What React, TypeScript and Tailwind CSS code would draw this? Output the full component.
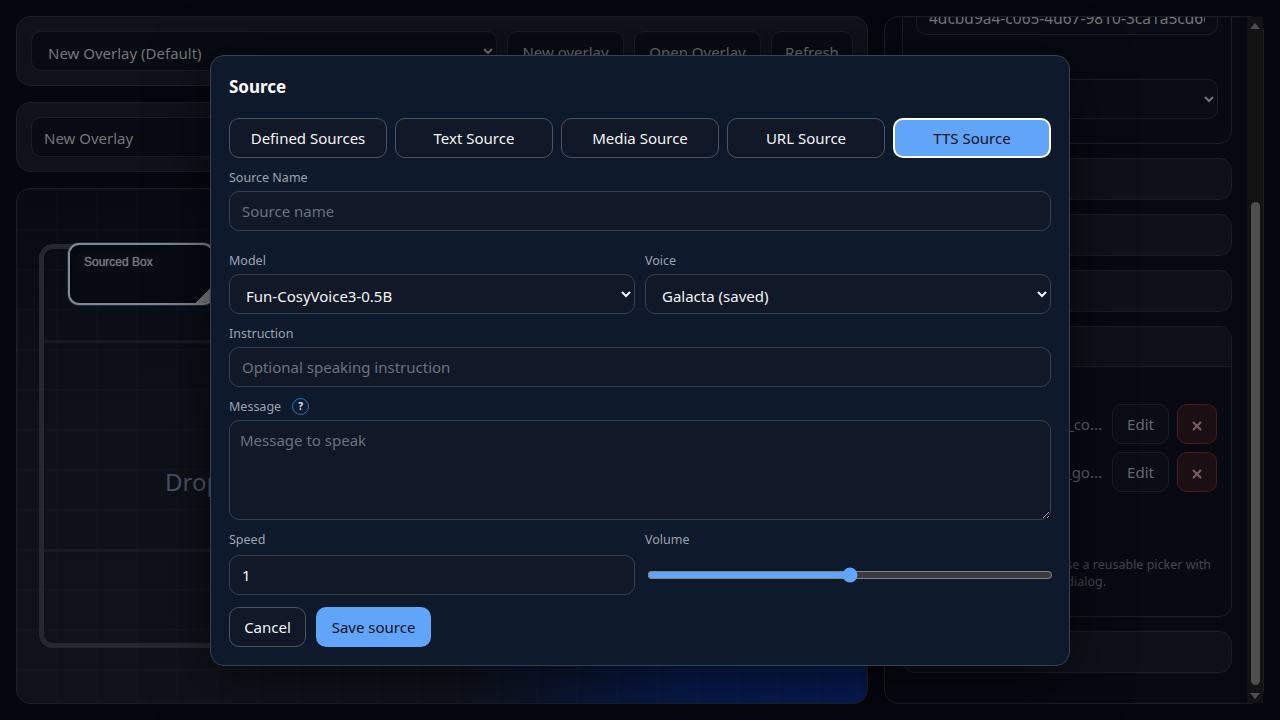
import React from "react";
import { X } from "lucide-react";

const dimBtn = "h-10 rounded-[10px] border border-[#1a1e27] bg-[#090c14] pt-[2px] text-[#6f7175] text-[15px] whitespace-nowrap";
const lbl = "block h-4 pt-[1px] leading-4 text-[12.5px] text-[#9ca3af]";
const field = "block w-full h-10 rounded-[10px] border border-[#374151] bg-[#111827] px-3 text-[15px] text-[#f3f4f6] placeholder:text-[#6b7280] outline-none";
const selectField = "block w-full h-10 rounded-[10px] border border-[#374151] bg-[#111827] px-3 pt-[4px] text-[15px] text-[#f3f4f6] outline-none";
const tab = "h-10 rounded-[10px] border border-[#4b5563] bg-[#111827] text-[15px] text-[#f3f4f6]";

function StubCard() {
  return <div className="h-[42px] shrink-0 rounded-[12px] border border-[#1a1e27] bg-[#0e1118]" />;
}

function FileRow({ name }: { name: string }) {
  return (
    <div className="flex items-center justify-end gap-2">
      <span className="flex-1 text-right pr-[2px] text-[15px] text-[#5f6165] whitespace-nowrap overflow-hidden">{name}</span>
      <button className="h-10 w-[57px] rounded-[10px] border border-[#1a1e27] bg-[#0a0d14] text-[15px] text-[#66686c]">Edit</button>
      <button className="h-10 w-10 flex items-center justify-center rounded-[10px] border border-[#4a1c20] bg-[#1c0f14] text-[#7c5e62]">
        <X size={14} strokeWidth={3.5} className="mt-[3px]" />
      </button>
    </div>
  );
}

export default function App() {
  return (
    <div className="relative h-screen w-full overflow-hidden bg-[#05070e] [color-scheme:dark] font-['Noto_Sans',sans-serif]">
      <div className="flex h-full gap-4 p-4">
        <div className="flex w-[852px] shrink-0 flex-col gap-4">
          <div className="flex h-[70px] shrink-0 items-center gap-[10px] rounded-[14px] border border-[#1a1f29] bg-[#0f1219] px-[14px]">
            <select className="h-10 min-w-0 flex-1 rounded-[10px] border border-[#1a1e27] bg-[#080b13] px-3 pt-[4px] text-[15px] text-[#74767a]">
              <option>New Overlay (Default)</option>
            </select>
            <button className={`${dimBtn} w-[117px] shrink-0`}>New overlay</button>
            <button className={`${dimBtn} w-[127px] shrink-0`}>Open Overlay</button>
            <button className={`${dimBtn} w-[82px] shrink-0`}>Refresh</button>
          </div>
          <div className="flex h-[70px] shrink-0 items-center rounded-[14px] border border-[#1a1f29] bg-[#0f1219] px-[14px]">
            <input readOnly value="New Overlay" className="h-10 w-full rounded-[10px] border border-[#1a1e27] bg-[#080b13] px-3 pt-[2px] text-[15px] text-[#74767a] outline-none" />
          </div>
          <div className="relative flex-1 overflow-hidden rounded-[14px] border border-[#1a1f29] bg-[radial-gradient(ellipse_420px_200px_at_100%_100%,#071b52_0%,#071a4a_45%,rgba(7,26,74,0)_100%),linear-gradient(180deg,#070a12_0%,#0e1118_45%,#0f1219_100%)]">
            <div className="absolute inset-0 bg-[linear-gradient(rgba(255,255,255,0.018)_1px,transparent_1px),linear-gradient(90deg,rgba(255,255,255,0.018)_1px,transparent_1px)] bg-[size:40px_40px]" />
            <div className="absolute left-[22px] top-[55px] h-[404px] w-[805px] rounded-[14px] border-[5px] border-[#26282d]">
              <div className="absolute left-0 right-0 top-[91px] h-[3px] bg-[#191b20]" />
              <div className="absolute left-0 right-0 top-[300px] h-[3px] bg-[#191b20]" />
            </div>
            <div className="absolute left-[148px] top-[277px] whitespace-nowrap text-2xl leading-8 text-[#4a5567]">Drop sources here to place them on the overlay</div>
            <div className="absolute left-[51px] top-[54px] h-[62px] w-[146px] overflow-hidden rounded-[11px] border-2 border-[#84878b] bg-[#070a12] shadow-[0_0_0_1px_rgba(59,100,160,0.35)]">
              <span className="absolute left-[6px] top-[7px] rounded-md bg-[#090c13] px-2 py-[2px] font-['Liberation_Sans',sans-serif] text-[12px] leading-4 text-[#74777b] [text-shadow:0_0_1px_#74777b]">Sourced Box</span>
              <div className="absolute bottom-0 right-0 h-4 w-4 bg-[linear-gradient(135deg,transparent_50%,#7a7c80_50%)]" />
            </div>
          </div>
        </div>

        <div className="flex h-[688px] w-[380px] shrink-0 rounded-[14px] border border-[#1a1f29] bg-[#060910]">
          <div className="min-w-0 flex-1 overflow-hidden pl-[17px] pr-[15px]">
            <div className="-mt-5 flex flex-col gap-[14px]">
              <div className="h-[147px] shrink-0 rounded-[12px] border border-[#1a1e27] bg-[#070a12] px-[13px] pt-[3px]">
                <input readOnly value="4dcbd9a4-c065-4d67-9810-3ca1a5cd6e12" className="h-[34px] w-full rounded-[10px] border border-[#1a1e27] bg-[#090c14] px-3 text-[15.5px] text-[#74767a] outline-none" />
                <select className="mt-[44px] h-10 w-full rounded-[10px] border border-[#1a1e27] bg-[#090c14] px-3 text-[15px] text-[#74767a]">
                  <option></option>
                </select>
              </div>
              <StubCard />
              <StubCard />
              <StubCard />
              <div className="h-[291px] shrink-0 overflow-hidden rounded-[12px] border border-[#1a1e27] bg-[#070a12]">
                <div className="h-10 border-b border-[#1a1e27] bg-[#0e1118]" />
                <div className="flex flex-col gap-2 px-[14px] pt-[37px]">
                  <FileRow name="tts_voice_sample_co..." />
                  <FileRow name="overlay_logo_image_go..." />
                </div>
                <p className="mt-[64px] pl-[14px] pr-[20px] text-right text-[12.5px] leading-[17px] text-[#45474c]">
                  Use a reusable picker with
                  <br />
                  <span className="block pr-[105px]">dialog.</span>
                </p>
              </div>
              <StubCard />
            </div>
          </div>
          <div className="flex w-4 shrink-0 flex-col items-center bg-[#131313]">
            <div className="mt-[6px] h-0 w-0 border-x-[5px] border-b-[6px] border-x-transparent border-b-[#4f4f4f]" />
            <div className="mt-[173px] h-[483px] w-[9px] rounded-full bg-[#4f4f4f]" />
            <div className="mt-[8px] h-0 w-0 border-x-[5px] border-t-[6px] border-x-transparent border-t-[#4f4f4f]" />
          </div>
        </div>
      </div>

      <div className="absolute inset-0 flex items-start justify-center pt-[55px]">
        <div className="h-[611px] w-[860px] rounded-[14px] border border-[#33415a] bg-[#0f192c] px-[18px] pt-[19px] shadow-[0_10px_60px_rgba(0,0,0,0.55)]">
          <h2 className="h-6 text-[17px] font-bold leading-6 text-white">Source</h2>
          <div className="mt-[19px] grid grid-cols-5 gap-2">
            <button className={tab}>Defined Sources</button>
            <button className={tab}>Text Source</button>
            <button className={tab}>Media Source</button>
            <button className={tab}>URL Source</button>
            <button className="h-10 rounded-[10px] border-2 border-white bg-[#60a5fa] text-[15px] text-[#0b1220]">TTS Source</button>
          </div>
          <label className={`${lbl} mt-[11px] mb-[6px]`}>Source Name</label>
          <input className={field} placeholder="Source name" />
          <div className="mt-[21px] grid grid-cols-2 gap-x-[10px]">
            <div>
              <label className={`${lbl} mb-[6px]`}>Model</label>
              <select className={selectField}><option>Fun-CosyVoice3-0.5B</option></select>
            </div>
            <div>
              <label className={`${lbl} mb-[6px]`}>Voice</label>
              <select className={selectField}><option>Galacta (saved)</option></select>
            </div>
          </div>
          <label className={`${lbl} mt-[11px] mb-[6px]`}>Instruction</label>
          <input className={field} placeholder="Optional speaking instruction" />
          <div className="mt-[11px] mb-[6px] flex h-4 items-center gap-[11px]">
            <label className={lbl}>Message</label>
            <span className="flex h-[17px] w-[17px] items-center justify-center rounded-full border border-[#2f6fb8] bg-[#0f1d33] text-[10px] font-bold leading-none text-[#dbeafe]">?</span>
          </div>
          <textarea className="block h-[100px] w-full rounded-[10px] border border-[#374151] bg-[#111827] px-[10px] pt-[9px] pb-[10px] text-[15px] leading-5 text-[#f3f4f6] placeholder:text-[#6b7280] outline-none" placeholder="Message to speak" />
          <div className="mt-[11px] grid grid-cols-2 gap-x-[10px]">
            <div>
              <label className={`${lbl} mb-2`}>Speed</label>
              <input readOnly value="1" className={field} />
            </div>
            <div>
              <label className={`${lbl} mb-2`}>Volume</label>
              <div className="flex h-10 items-center">
                <input type="range" readOnly min={0} max={100} value={50} className="ml-[2px] w-full min-w-full accent-[#60a5fa]" />
              </div>
            </div>
          </div>
          <div className="mt-3 flex gap-[10px]">
            <button className="h-10 w-[77px] rounded-[10px] border border-[#4b5563] bg-[#111827] text-[15px] text-[#f3f4f6]">Cancel</button>
            <button className="h-10 w-[115px] rounded-[10px] bg-[#60a5fa] text-[15px] text-[#0b1220]">Save source</button>
          </div>
        </div>
      </div>
    </div>
  );
}
